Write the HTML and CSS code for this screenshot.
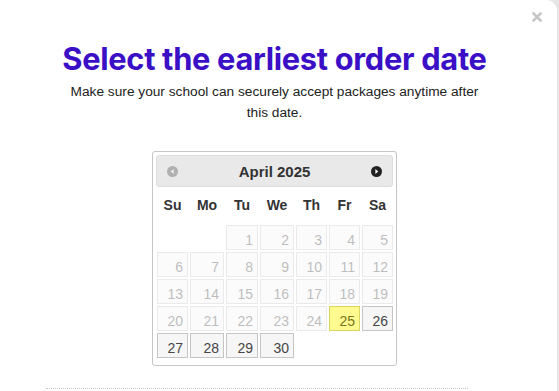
FILE: index.html
```html
<!DOCTYPE html>
<html>
<head>
<meta charset="utf-8">
<link rel="stylesheet" href="styles.css">
</head>
<body>
<div class="modal">
  <button class="close" aria-label="Close">
    <svg width="10" height="10" viewBox="0 0 10 10"><path d="M1.5 1.5 L8.5 8.5 M8.5 1.5 L1.5 8.5" stroke="#c6c6c6" stroke-width="2.6" stroke-linecap="square"/></svg>
  </button>
  <div class="content">
    <h1 class="title">Select the earliest order date</h1>
    <p class="subtitle">Make sure your school can securely accept packages anytime after this date.</p>
    <div class="datepicker">
      <div class="dp-header">
        <span class="nav prev"><svg width="11" height="11" viewBox="0 0 11 11"><circle cx="5.5" cy="5.5" r="5.5" fill="#b0b0b0"/><path d="M6.6 3 L3.8 5.5 L6.6 8 Z" fill="#f0f0f0"/></svg></span>
        <span class="month">April 2025</span>
        <span class="nav next"><svg width="11" height="11" viewBox="0 0 11 11"><circle cx="5.5" cy="5.5" r="5.5" fill="#222"/><path d="M4.4 3 L7.2 5.5 L4.4 8 Z" fill="#fff"/></svg></span>
      </div>
      <div class="dp-grid">
        <div class="dow">Su</div><div class="dow">Mo</div><div class="dow">Tu</div><div class="dow">We</div><div class="dow">Th</div><div class="dow">Fr</div><div class="dow">Sa</div>
        <div class="empty"></div><div class="empty"></div>
        <div class="day off">1</div><div class="day off">2</div><div class="day off">3</div><div class="day off">4</div><div class="day off">5</div>
        <div class="day off">6</div><div class="day off">7</div><div class="day off">8</div><div class="day off">9</div><div class="day off">10</div><div class="day off">11</div><div class="day off">12</div>
        <div class="day off">13</div><div class="day off">14</div><div class="day off">15</div><div class="day off">16</div><div class="day off">17</div><div class="day off">18</div><div class="day off">19</div>
        <div class="day off">20</div><div class="day off">21</div><div class="day off">22</div><div class="day off">23</div><div class="day off">24</div><div class="day today">25</div><div class="day">26</div>
        <div class="day">27</div><div class="day">28</div><div class="day">29</div><div class="day">30</div>
      </div>
    </div>
  </div>
  <div class="footer-line"></div>
</div>
</body>
</html>
```

FILE: styles.css
```css
html, body {
  margin: 0;
  padding: 0;
  height: 100%;
}
body {
  background: #e6e6e6;
  overflow: hidden;
  font-family: "Liberation Sans", Arial, sans-serif;
}
.modal {
  position: relative;
  width: 557px;
  height: 391px;
  background: #fff;
  border-top-right-radius: 11px;
  box-sizing: border-box;
  padding-right: 8px;
}
.close {
  position: absolute;
  top: 12px;
  left: 532px;
  width: 10px;
  height: 10px;
  padding: 0;
  border: 0;
  background: none;
  display: flex;
}
.content {
  display: flex;
  flex-direction: column;
  align-items: center;
  padding-top: 39px;
}
.title {
  margin: 0;
  font-family: Inter, "Noto Sans", sans-serif;
  font-weight: 700;
  font-size: 30.8px;
  line-height: 40px;
  letter-spacing: -0.3px;
  color: #3a0fc6;
}
.subtitle {
  margin: 2px 0 0;
  width: 430px;
  text-align: center;
  font-family: "Liberation Sans", Arial, sans-serif;
  font-size: 13.7px;
  line-height: 21px;
  color: #222;
}
.datepicker {
  margin-top: 28px;
  width: 245px;
  box-sizing: border-box;
  border: 1px solid #c5c5c5;
  border-radius: 3px;
  padding: 3px 3px 7px;
  color: #333;
}
.dp-header {
  height: 32px;
  box-sizing: border-box;
  border: 1px solid #dddddd;
  border-radius: 3px;
  background: #e9e9e9;
  display: flex;
  align-items: center;
  justify-content: space-between;
  padding: 0 10px;
}
.nav {
  display: flex;
  width: 11px;
  height: 11px;
}
.month {
  font-weight: 700;
  font-size: 15px;
  color: #333;
}
.dp-grid {
  display: grid;
  grid-template-columns: 31px 34px 32px 34px 31px 31px 31px;
  grid-template-rows: 36px;
  grid-auto-rows: 25px;
  column-gap: 2px;
  row-gap: 2px;
  padding: 0 1px;
}
.dow {
  grid-row: 1;
  font-weight: 700;
  font-size: 14px;
  text-align: center;
  line-height: 36px;
  height: 36px;
}
.day {
  box-sizing: border-box;
  border: 1px solid #c5c5c5;
  background: #f6f6f6;
  color: #454545;
  font-size: 14px;
  text-align: right;
  padding: 5px 4px 0 0;
  line-height: 18px;
}
.day.off {
  opacity: 0.35;
}
.day.today {
  border-color: #dad55e;
  background: #fffa90;
  color: #777620;
}
.footer-line {
  position: absolute;
  left: 46px;
  top: 388px;
  width: 422px;
  border-top: 1px dotted #c8c8c8;
}
```
